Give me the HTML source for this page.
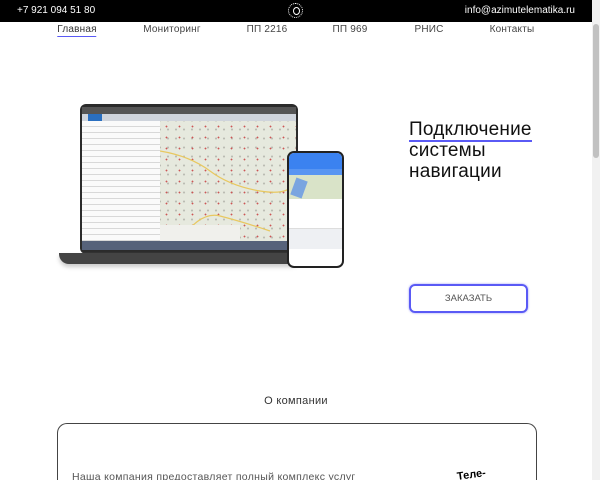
<!DOCTYPE html>
<html style="width:600px;height:480px;overflow:hidden"><head><meta charset="utf-8"><style>
*{margin:0;padding:0;box-sizing:border-box}
body{width:600px;height:480px;overflow:hidden;background:#fff;font-family:"Liberation Sans",sans-serif;position:relative;color:#222}
.top{position:absolute;left:0;top:0;width:592px;height:22px;background:#000;color:#fff;font-size:10px}
.top .ph{position:absolute;left:17px;top:5px}
.top .em{position:absolute;right:17px;top:5px}
.logo{position:absolute;left:288px;top:3px;width:15px;height:15px;border:1.5px dotted #fff;border-radius:50%}
.logo:after{content:"";position:absolute;left:3.5px;top:3px;width:5px;height:6px;border:1.5px solid #fff;border-radius:50%}
.nav{position:absolute;top:24px;font-size:10px;color:#444;transform:translateX(-50%);white-space:nowrap;letter-spacing:0.2px}
.sb{position:absolute;right:0;top:0;width:8px;height:480px;background:#f1f1f1}
.sb i{position:absolute;left:1px;top:24px;width:6px;height:134px;background:#c1c1c1;border-radius:3px}
.lap{position:absolute;left:80px;top:104px;width:218px;height:150px;background:#2b2b2b;border-radius:6px}
.scr{position:absolute;left:82px;top:107px;width:214px;height:143px;background:#fff;overflow:hidden}
.base{position:absolute;left:59px;top:253px;width:240px;height:11px;background:#444;border-radius:0 0 6px 10px;box-shadow:0 3px 4px #ccc}
.map{position:absolute;left:78px;top:14px;width:136px;height:120px;background:#e6e9de;
background-image:radial-gradient(circle,#c55 0.7px,transparent 1.1px),radial-gradient(circle,#b8b8b0 0.7px,transparent 1.3px);background-size:13px 11px,8px 9px;background-position:0 0,4px 4px}
.rows{position:absolute;left:0;top:14px;width:78px;height:120px;background:repeating-linear-gradient(#fafafa 0 5px,#d8d8d8 5px 6px)}
.phone{position:absolute;left:287px;top:151px;width:57px;height:117px;background:#222;border-radius:7px}
.psc{position:absolute;left:289px;top:153px;width:53px;height:113px;background:#fff;border-radius:5px;overflow:hidden}
h1{position:absolute;left:409px;top:119px;font-size:19px;font-weight:normal;line-height:21px;color:#111;letter-spacing:0.2px}
h1 u{text-decoration:none;border-bottom:2px solid #5a5af5}
.btn{position:absolute;left:409px;top:284px;width:119px;height:29px;border:2px solid #5a5af5;border-radius:6px;font-size:9.5px;color:#555;text-align:center;line-height:25px;box-shadow:0 0 2px #9a9af8}
.ok{position:absolute;left:296px;top:395px;font-size:11px;transform:translateX(-50%);color:#333;letter-spacing:0.3px}
.box{position:absolute;left:57px;top:423px;width:480px;height:57px;border:1.5px solid #444;border-bottom:none;border-radius:10px 10px 0 0}
.txt{position:absolute;left:72px;top:471px;font-size:10.5px;color:#555;letter-spacing:0.3px}
.tel{position:absolute;left:457px;top:469px;font-size:11px;font-weight:bold;color:#000;transform:rotate(-8deg)}
</style></head><body>
<div class="top"><span class="ph">+7 921 094 51 80</span><div class="logo"></div><span class="em">info@azimutelematika.ru</span></div>
<div class="nav" style="left:77px;color:#333;border-bottom:1.5px solid #5a5af5;padding-bottom:1px">Главная</div>
<div class="nav" style="left:172px">Мониторинг</div>
<div class="nav" style="left:267px">ПП 2216</div>
<div class="nav" style="left:350px">ПП 969</div>
<div class="nav" style="left:429px">РНИС</div>
<div class="nav" style="left:512px">Контакты</div>
<div class="lap"></div><div class="base"></div>
<div class="scr">
<div style="position:absolute;left:0;top:0;width:214px;height:7px;background:#555"></div>
<div style="position:absolute;left:0;top:7px;width:214px;height:7px;background:#cfd4dc"></div>
<div style="position:absolute;left:6px;top:7px;width:14px;height:7px;background:#2a6fc0"></div>
<div class="rows"></div><div class="map"></div>
<svg style="position:absolute;left:78px;top:14px" width="136" height="120"><path d="M0 30 Q30 35 50 50 T100 70 T136 60" stroke="#e8c860" stroke-width="1.2" fill="none"/><path d="M20 120 Q40 90 60 95 T110 110" stroke="#e8c860" stroke-width="1.2" fill="none"/></svg>
<div style="position:absolute;left:78px;top:118px;width:80px;height:16px;background:#f0f0ec"></div>
<div style="position:absolute;left:0;top:134px;width:214px;height:9px;background:#56627a"></div>
</div>
<div class="phone"></div>
<div class="psc">
<div style="height:16px;background:#3b82f0"></div>
<div style="height:6px;background:#3b82f0;opacity:.85"></div>
<div style="height:24px;background:#d9e3c8;position:relative"><div style="position:absolute;left:4px;top:4px;width:12px;height:18px;background:#7aa5e0;transform:rotate(20deg)"></div></div>
<div style="height:30px;border-bottom:1px solid #ddd"></div>
<div style="height:20px;background:#eef0f3"></div>
</div>
<h1><u>Подключение</u><br>системы<br>навигации</h1>
<div class="btn">ЗАКАЗАТЬ</div>
<div class="ok">О компании</div>
<div class="box"></div>
<div class="txt">Наша компания предоставляет полный комплекс услуг</div>
<div class="tel">Теле-</div>
<div class="sb"><i></i></div>
</body></html>
